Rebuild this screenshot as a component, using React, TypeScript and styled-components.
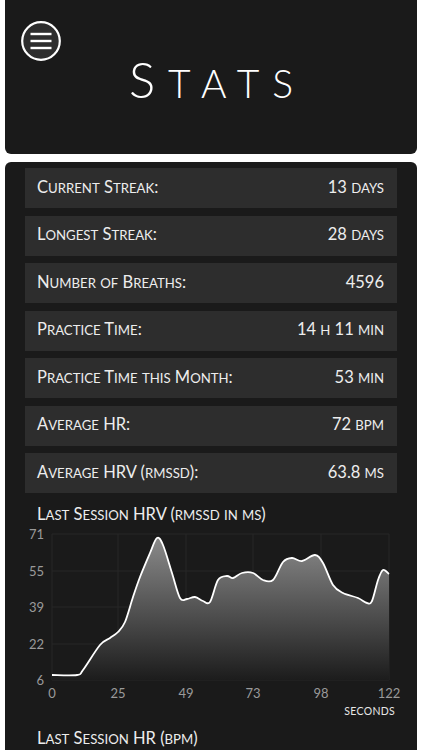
import React from 'react';
import styled, { createGlobalStyle } from 'styled-components';

const colors = {
  page: '#ffffff',
  card: '#1a1a1a',
  row: '#2d2d2d',
  text: '#ededed',
  axis: '#9a9a9a',
  grid: '#272727',
};

const stats = [
  { label: 'Current Streak:', value: '13 days' },
  { label: 'Longest Streak:', value: '28 days' },
  { label: 'Number of Breaths:', value: '4596' },
  { label: 'Practice Time:', value: '14 h 11 min' },
  { label: 'Practice Time this Month:', value: '53 min' },
  { label: 'Average HR:', value: '72 bpm' },
  { label: 'Average HRV (rmssd):', value: '63.8 ms' },
];

// chart coordinates (svg space)
const plot = { left: 27, right: 364, top: 11, bottom: 157 };
const yTicks = [
  { label: '71', y: 11 },
  { label: '55', y: 48 },
  { label: '39', y: 84 },
  { label: '22', y: 121 },
  { label: '6', y: 157 },
];
const xTicks = [
  { label: '0', x: 27 },
  { label: '25', x: 93 },
  { label: '49', x: 161 },
  { label: '73', x: 228 },
  { label: '98', x: 296 },
  { label: '122', x: 364 },
];

const hrv: [number, number][] = [
  [27, 152], [52, 152], [58, 147], [75, 122], [85, 115], [93, 109], [100, 99],
  [108, 74], [115, 54], [125, 30], [132, 15], [138, 22], [147, 50], [155, 75],
  [162, 76], [170, 74], [178, 78], [185, 79], [193, 57], [202, 53], [208, 55],
  [217, 50], [228, 50], [238, 57], [248, 57], [258, 39], [267, 35], [277, 38],
  [290, 32], [298, 40], [308, 62], [318, 70], [333, 75], [342, 80], [347, 78],
  [353, 57], [358, 47], [364, 51],
];

function smoothPath(pts: [number, number][]) {
  let d = `M${pts[0][0]},${pts[0][1]}`;
  for (let i = 0; i < pts.length - 1; i++) {
    const p0 = pts[i - 1] || pts[i];
    const p1 = pts[i];
    const p2 = pts[i + 1];
    const p3 = pts[i + 2] || p2;
    const c1x = p1[0] + (p2[0] - p0[0]) / 6;
    const c1y = p1[1] + (p2[1] - p0[1]) / 6;
    const c2x = p2[0] - (p3[0] - p1[0]) / 6;
    const c2y = p2[1] - (p3[1] - p1[1]) / 6;
    d += ` C${c1x.toFixed(1)},${c1y.toFixed(1)} ${c2x.toFixed(1)},${c2y.toFixed(1)} ${p2[0]},${p2[1]}`;
  }
  return d;
}

// the app's small caps: lower-case letters drawn as smaller capitals
function SmallCaps({ text }: { text: string }) {
  const runs = text.match(/[a-z]+|[^a-z]+/g) || [];
  return (
    <>
      {runs.map((run, i) =>
        /[a-z]/.test(run[0]) ? <Lower key={i}>{run}</Lower> : <React.Fragment key={i}>{run}</React.Fragment>,
      )}
    </>
  );
}

function HrvChart() {
  const line = smoothPath(hrv);
  const area = `${line} L${plot.right},${plot.bottom} L${plot.left},${plot.bottom} Z`;
  return (
    <ChartSvg width="372" height="200" viewBox="0 0 372 200">
      <defs>
        <linearGradient id="hrvFill" x1="0" y1="0" x2="0" y2="1">
          <stop offset="0%" stopColor="#8a8a8a" />
          <stop offset="100%" stopColor="#1c1c1c" />
        </linearGradient>
      </defs>
      {yTicks.map((t) => (
        <line key={t.label} x1={plot.left} x2={plot.right} y1={t.y} y2={t.y} stroke={colors.grid} />
      ))}
      {xTicks.map((t) => (
        <line key={t.label} x1={t.x} x2={t.x} y1={plot.top} y2={plot.bottom} stroke={colors.grid} />
      ))}
      <path d={area} fill="url(#hrvFill)" />
      <path d={line} fill="none" stroke="#ffffff" strokeWidth="1.8" />
      {yTicks.map((t) => (
        <AxisText key={t.label} x={19} y={t.y + 5} textAnchor="end">
          {t.label}
        </AxisText>
      ))}
      {xTicks.map((t) => (
        <AxisText key={t.label} x={t.x} y={175} textAnchor="middle">
          {t.label}
        </AxisText>
      ))}
      <UnitText x={370} y={192} textAnchor="end">
        SECONDS
      </UnitText>
    </ChartSvg>
  );
}

export default function App() {
  return (
    <>
      <GlobalStyle />
      <Page>
        <Header>
          <MenuButton aria-label="menu">
            <svg width="40" height="40" viewBox="0 0 40 40">
              <circle cx="20" cy="20" r="18.8" fill="#2e2e2e" stroke="#fff" strokeWidth="2.2" />
              <line x1="9.5" x2="30.5" y1="13" y2="13" stroke="#fff" strokeWidth="2.4" />
              <line x1="9.5" x2="30.5" y1="20" y2="20" stroke="#fff" strokeWidth="2.4" />
              <line x1="9.5" x2="30.5" y1="27" y2="27" stroke="#fff" strokeWidth="2.4" />
            </svg>
          </MenuButton>
          <Title>
            <TitleCap>S</TitleCap>
            <TitleSmall>tats</TitleSmall>
          </Title>
        </Header>
        <Body>
          <StatList>
            {stats.map((s) => (
              <StatRow key={s.label}>
                <span>
                  <SmallCaps text={s.label} />
                </span>
                <span>
                  <SmallCaps text={s.value} />
                </span>
              </StatRow>
            ))}
          </StatList>
          <SectionTitle>
            <SmallCaps text="Last Session HRV (rmssd in ms)" />
          </SectionTitle>
          <HrvChart />
          <SectionTitle $gap={6}>
            <SmallCaps text="Last Session HR (bpm)" />
          </SectionTitle>
        </Body>
      </Page>
    </>
  );
}

const GlobalStyle = createGlobalStyle`
  html, body {
    margin: 0;
    padding: 0;
    background: ${colors.page};
    font-family: Lato, "Open Sans", sans-serif;
  }
  * { box-sizing: border-box; }
`;

const Page = styled.div`
  width: 422px;
  height: 750px;
  overflow: hidden;
  display: flex;
  flex-direction: column;
  gap: 8px;
`;

const Header = styled.header`
  margin: 0 5px;
  height: 154px;
  flex-shrink: 0;
  background: ${colors.card};
  border-radius: 0 0 6px 6px;
  padding: 21px 16px 0;
  display: grid;
  grid-template-columns: 1fr auto 1fr;
  align-items: start;
`;

const MenuButton = styled.button`
  width: 40px;
  height: 40px;
  padding: 0;
  border: 0;
  background: none;
  display: flex;
`;

const Title = styled.h1`
  margin: 34px -13px 0 0;
  color: #fff;
  font-family: Lato, sans-serif;
  font-weight: 300;
  letter-spacing: 13px;
  line-height: 1;
  display: flex;
  align-items: baseline;
`;

const TitleCap = styled.span`
  font-size: 49px;
`;

const TitleSmall = styled.span`
  font-size: 39px;
  text-transform: uppercase;
`;

const Body = styled.main`
  margin: 0 5px;
  flex: 1;
  background: ${colors.card};
  border-radius: 6px 6px 0 0;
  padding: 6px 20px 0;
`;

const StatList = styled.div`
  display: flex;
  flex-direction: column;
  gap: 7.5px;
`;

const Lower = styled.span`
  text-transform: uppercase;
  font-size: 0.8em;
`;

const StatRow = styled.div`
  height: 40px;
  background: ${colors.row};
  padding: 0 13px 3px 12px;
  display: flex;
  align-items: center;
  justify-content: space-between;
  color: ${colors.text};
  font-size: 16.5px;
  white-space: pre;
`;

const SectionTitle = styled.h2<{ $gap?: number }>`
  margin: ${({ $gap = 12 }) => $gap}px 0 0 12px;
  height: 18px;
  line-height: 18px;
  color: ${colors.text};
  font-size: 16.5px;
  font-weight: 400;
  white-space: pre;
`;

const ChartSvg = styled.svg`
  display: block;
  overflow: visible;
  font-family: Lato, sans-serif;
`;

const AxisText = styled.text`
  fill: ${colors.axis};
  font-size: 13px;
`;

const UnitText = styled.text`
  fill: #e6e6e6;
  font-size: 10.5px;
  letter-spacing: 0.3px;
`;
